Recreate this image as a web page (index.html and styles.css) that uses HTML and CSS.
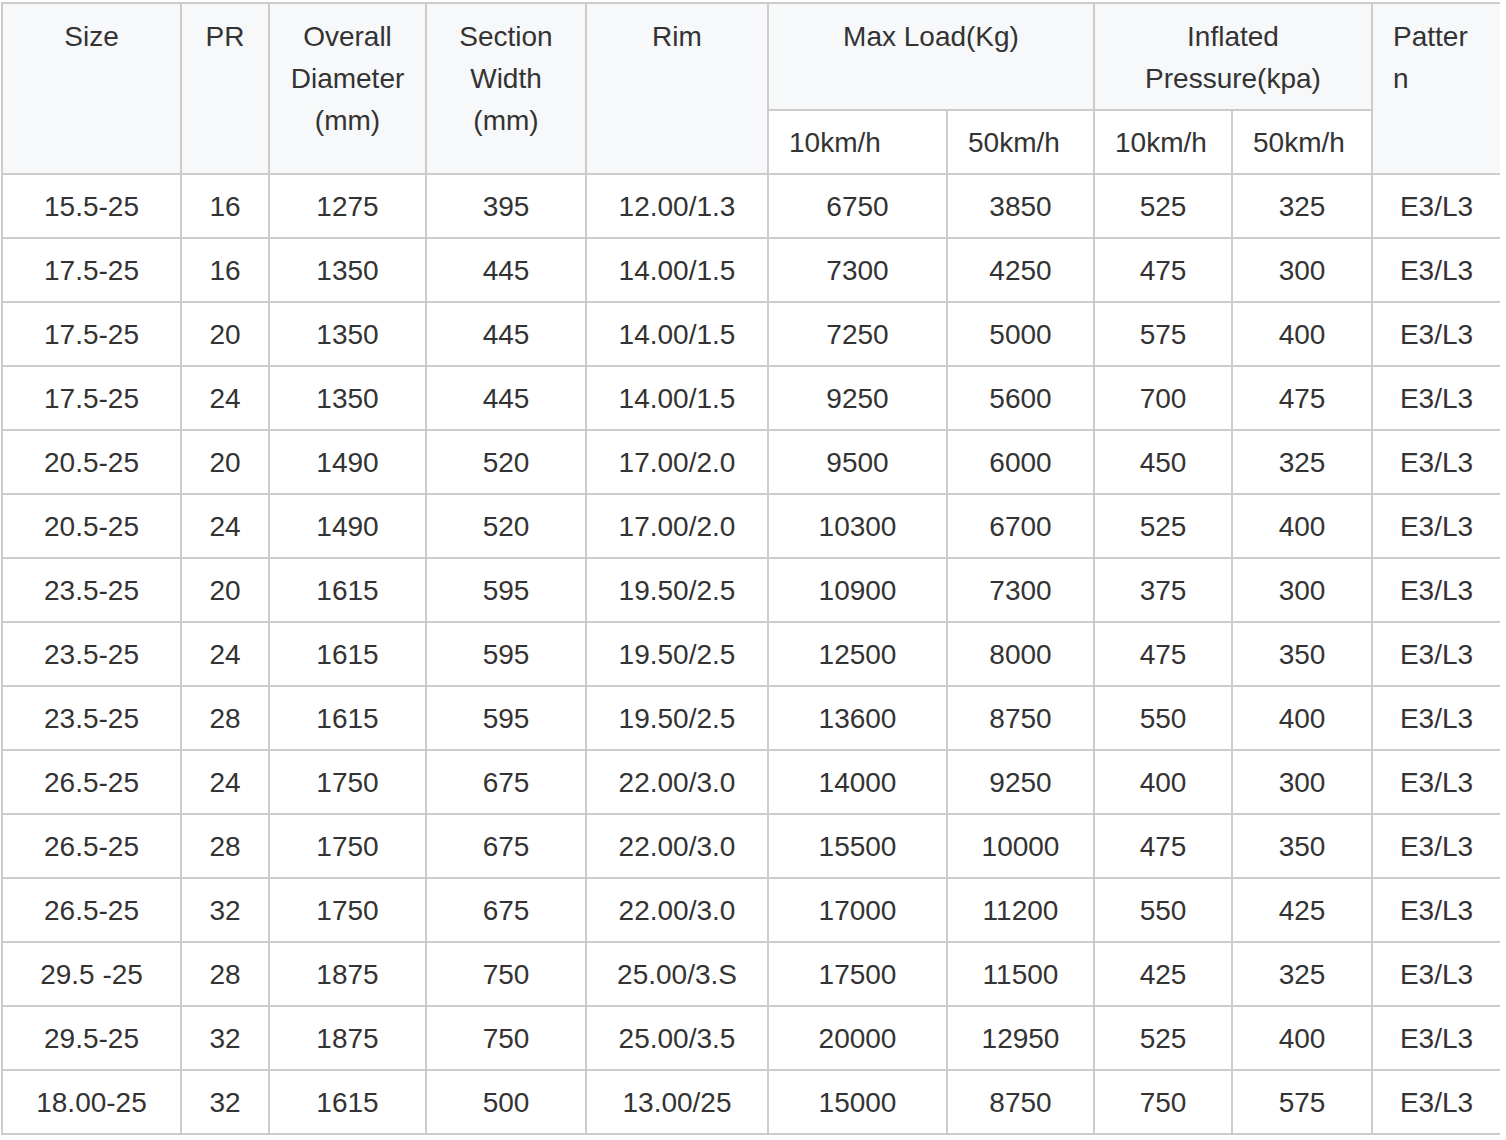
FILE: index.html
```html
<!DOCTYPE html>
<html lang="en">
<head>
<meta charset="utf-8">
<title>Tyre Specifications</title>
<link rel="stylesheet" href="styles.css">
</head>
<body>
<table class="spec">
  <colgroup>
    <col class="c1"><col class="c2"><col class="c3"><col class="c4"><col class="c5">
    <col class="c6"><col class="c7"><col class="c8"><col class="c9"><col class="c10">
  </colgroup>
  <thead>
    <tr class="head-top">
      <th rowspan="2">Size</th>
      <th rowspan="2">PR</th>
      <th rowspan="2">Overall Diameter (mm)</th>
      <th rowspan="2">Section Width (mm)</th>
      <th rowspan="2">Rim</th>
      <th colspan="2">Max Load(Kg)</th>
      <th colspan="2">Inflated Pressure(kpa)</th>
      <th rowspan="2" class="pattern last">Pattern</th>
    </tr>
    <tr class="head-sub">
      <th>10km/h</th>
      <th>50km/h</th>
      <th>10km/h</th>
      <th>50km/h</th>
    </tr>
  </thead>
  <tbody>
    <tr><td>15.5-25</td><td>16</td><td>1275</td><td>395</td><td>12.00/1.3</td><td>6750</td><td>3850</td><td>525</td><td>325</td><td class="last">E3/L3</td></tr>
    <tr><td>17.5-25</td><td>16</td><td>1350</td><td>445</td><td>14.00/1.5</td><td>7300</td><td>4250</td><td>475</td><td>300</td><td class="last">E3/L3</td></tr>
    <tr><td>17.5-25</td><td>20</td><td>1350</td><td>445</td><td>14.00/1.5</td><td>7250</td><td>5000</td><td>575</td><td>400</td><td class="last">E3/L3</td></tr>
    <tr><td>17.5-25</td><td>24</td><td>1350</td><td>445</td><td>14.00/1.5</td><td>9250</td><td>5600</td><td>700</td><td>475</td><td class="last">E3/L3</td></tr>
    <tr><td>20.5-25</td><td>20</td><td>1490</td><td>520</td><td>17.00/2.0</td><td>9500</td><td>6000</td><td>450</td><td>325</td><td class="last">E3/L3</td></tr>
    <tr><td>20.5-25</td><td>24</td><td>1490</td><td>520</td><td>17.00/2.0</td><td>10300</td><td>6700</td><td>525</td><td>400</td><td class="last">E3/L3</td></tr>
    <tr><td>23.5-25</td><td>20</td><td>1615</td><td>595</td><td>19.50/2.5</td><td>10900</td><td>7300</td><td>375</td><td>300</td><td class="last">E3/L3</td></tr>
    <tr><td>23.5-25</td><td>24</td><td>1615</td><td>595</td><td>19.50/2.5</td><td>12500</td><td>8000</td><td>475</td><td>350</td><td class="last">E3/L3</td></tr>
    <tr><td>23.5-25</td><td>28</td><td>1615</td><td>595</td><td>19.50/2.5</td><td>13600</td><td>8750</td><td>550</td><td>400</td><td class="last">E3/L3</td></tr>
    <tr><td>26.5-25</td><td>24</td><td>1750</td><td>675</td><td>22.00/3.0</td><td>14000</td><td>9250</td><td>400</td><td>300</td><td class="last">E3/L3</td></tr>
    <tr><td>26.5-25</td><td>28</td><td>1750</td><td>675</td><td>22.00/3.0</td><td>15500</td><td>10000</td><td>475</td><td>350</td><td class="last">E3/L3</td></tr>
    <tr><td>26.5-25</td><td>32</td><td>1750</td><td>675</td><td>22.00/3.0</td><td>17000</td><td>11200</td><td>550</td><td>425</td><td class="last">E3/L3</td></tr>
    <tr><td>29.5 -25</td><td>28</td><td>1875</td><td>750</td><td>25.00/3.S</td><td>17500</td><td>11500</td><td>425</td><td>325</td><td class="last">E3/L3</td></tr>
    <tr><td>29.5-25</td><td>32</td><td>1875</td><td>750</td><td>25.00/3.5</td><td>20000</td><td>12950</td><td>525</td><td>400</td><td class="last">E3/L3</td></tr>
    <tr><td>18.00-25</td><td>32</td><td>1615</td><td>500</td><td>13.00/25</td><td>15000</td><td>8750</td><td>750</td><td>575</td><td class="last">E3/L3</td></tr>
  </tbody>
</table>
</body>
</html>
```

FILE: styles.css
```css
html, body {
  margin: 0;
  padding: 0;
  background: #ffffff;
}

body {
  padding: 2px 0 0 1px;
  font-family: "Liberation Sans", Arial, Helvetica, sans-serif;
  color: #333333;
  overflow: hidden;
}

.spec {
  border-collapse: separate;
  border-spacing: 0;
  table-layout: fixed;
  width: 1499px;
  border-left: 2px solid #cccccc;
  border-top: 2px solid #cccccc;
  font-size: 28px;
  line-height: 42px;
}

.c1 { width: 179px; }
.c2 { width: 88px; }
.c3 { width: 157px; }
.c4 { width: 160px; }
.c5 { width: 182px; }
.c6 { width: 179px; }
.c7 { width: 147px; }
.c8 { width: 138px; }
.c9 { width: 140px; }
.c10 { width: 127px; }

.spec th,
.spec td {
  border-right: 2px solid #cccccc;
  border-bottom: 2px solid #cccccc;
  padding: 11px 20px 9px;
  font-weight: normal;
  text-align: center;
  vertical-align: middle;
}

.spec .last {
  border-right: none;
}

.spec thead th {
  background: #f7f8fa;
  vertical-align: top;
}

.head-top th {
  padding-top: 12px;
  padding-bottom: 9px;
}

.spec .head-sub th {
  background: #ffffff;
  text-align: left;
  vertical-align: middle;
}

.spec th.pattern {
  text-align: left;
  word-break: break-all;
}
```
